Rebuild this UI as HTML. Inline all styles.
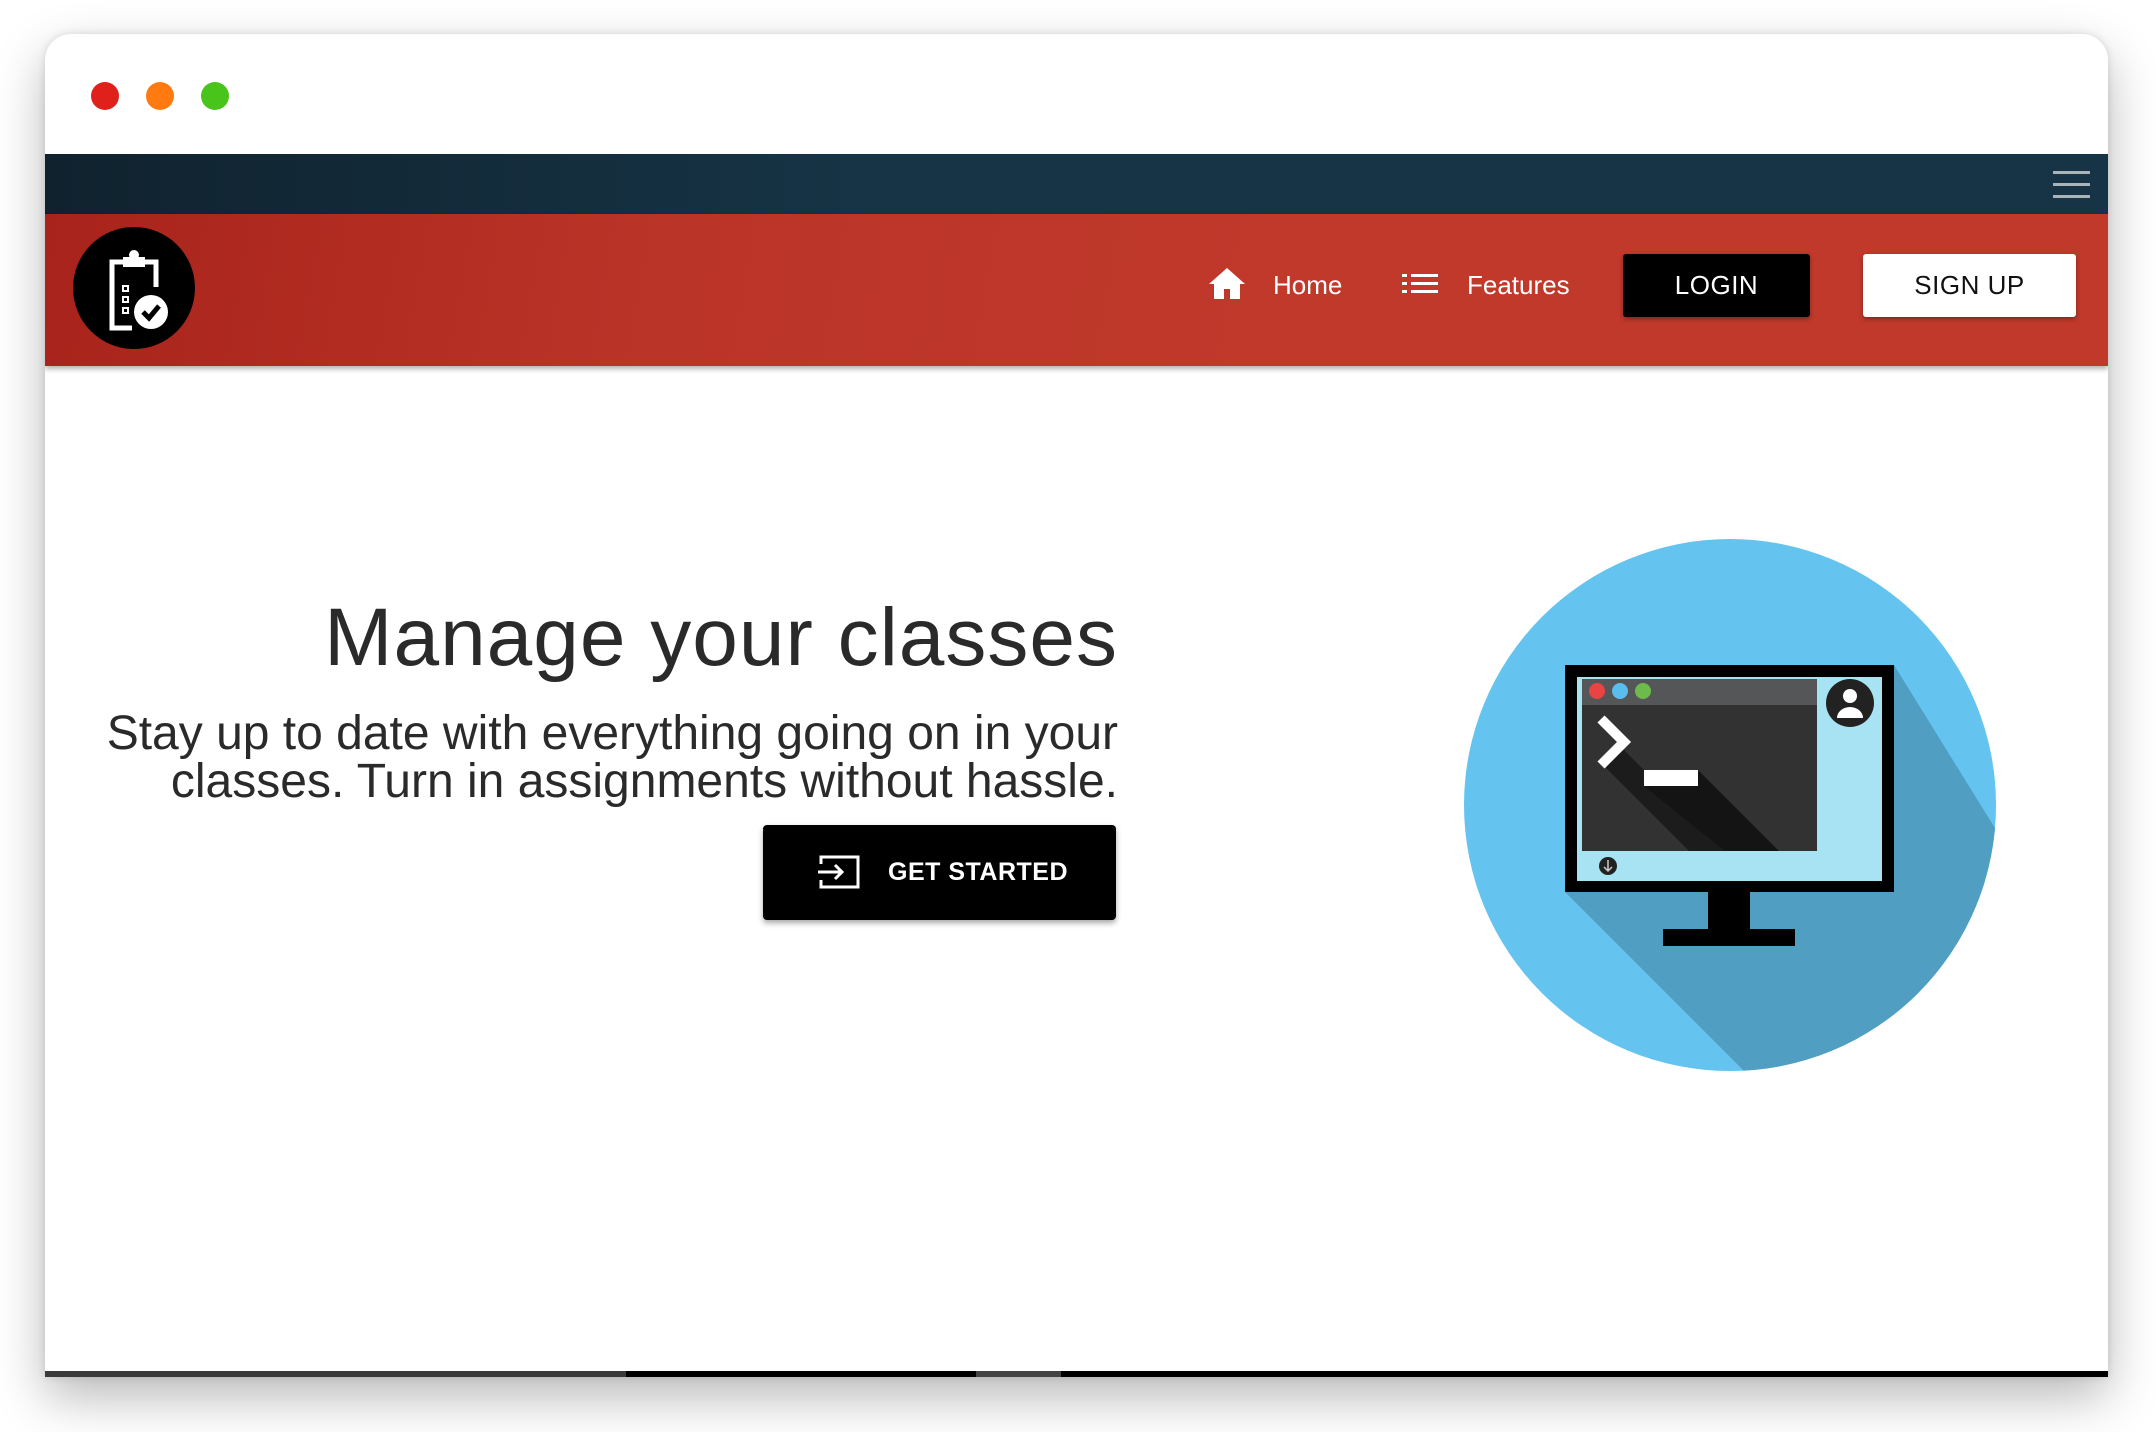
<!DOCTYPE html>
<html><head><meta charset="utf-8"><style>
*{margin:0;padding:0;box-sizing:border-box}
body{width:2156px;height:1432px;background:#fff;position:relative;overflow:hidden;font-family:"Liberation Sans",sans-serif}
.win{position:absolute;left:45px;top:34px;width:2063px;height:1343px;background:#fff;border-radius:26px 26px 0 0;box-shadow:0 20px 50px rgba(0,0,0,.28),0 0 8px rgba(0,0,0,.12);overflow:hidden}
.dot{position:absolute;top:48px;width:28px;height:28px;border-radius:50%}
.topbar{position:absolute;left:0;top:120px;width:100%;height:60px;background:linear-gradient(90deg,#10222e,#163446 40%,#173447)}
.ham{position:absolute;right:18px;width:37px;height:3px;background:#aab3b8}
.nav{position:absolute;left:0;top:180px;width:100%;height:152px;background:linear-gradient(100deg,#a8231b 0%,#bb3428 30%,#c0392b 60%,#c0392b);box-shadow:0 3px 5px rgba(0,0,0,.3)}
.logo{position:absolute;left:28px;top:13px;width:122px;height:122px;border-radius:50%;background:#000}
.navt{position:absolute;color:#fff;font-size:26px;top:56px}
.btn{position:absolute;top:40px;height:63px;font-size:26px;display:flex;align-items:center;justify-content:center;border-radius:3px;box-shadow:0 2px 4px rgba(0,0,0,.35);letter-spacing:.5px}
h1{position:absolute;right:990px;top:557px;font-weight:normal;font-size:82px;color:#2a2a2a;letter-spacing:1px;white-space:nowrap}
.sub{position:absolute;right:990px;top:676px;text-align:right;font-size:48px;line-height:48px;color:#2a2a2a;white-space:nowrap}
.gs{position:absolute;left:718px;top:791px;width:353px;height:95px;background:#000;border-radius:4px;box-shadow:0 3px 6px rgba(0,0,0,.35);color:#fff;font-size:25px;font-weight:bold;letter-spacing:.5px}
.bottom{position:absolute;left:0;bottom:0;width:100%;height:6px;background:#000}
</style></head><body>
<div class="win">
  <div class="dot" style="left:46px;background:#e0201b"></div>
  <div class="dot" style="left:101px;background:#ff7a10"></div>
  <div class="dot" style="left:156px;background:#48c41b"></div>
  <div class="topbar">
    <div class="ham" style="top:17px"></div><div class="ham" style="top:29px"></div><div class="ham" style="top:41px"></div>
  </div>
  <div class="nav">
    <div class="logo">
      <svg width="122" height="122" viewBox="0 0 122 122">
        <path d="M52 35h-13v66h20" fill="none" stroke="#fff" stroke-width="5"/>
        <path d="M70 35h13v25" fill="none" stroke="#fff" stroke-width="5"/>
        <rect x="50" y="30" width="22" height="10" fill="#fff"/>
        <circle cx="61" cy="28" r="5" fill="#fff"/>
        <rect x="50" y="59" width="5" height="5" fill="none" stroke="#fff" stroke-width="2"/>
        <rect x="50" y="70" width="5" height="5" fill="none" stroke="#fff" stroke-width="2"/>
        <rect x="50" y="81" width="5" height="5" fill="none" stroke="#fff" stroke-width="2"/>
        <circle cx="78" cy="85" r="17" fill="#fff"/>
        <path d="M70 85l6 6 10-12" fill="none" stroke="#000" stroke-width="5"/>
      </svg>
    </div>
    <svg style="position:absolute;left:1163px;top:52px" width="38" height="34" viewBox="0 0 38 34"><path d="M19 2L1 18h5v15h10v-10h6v10h10V18h5z" fill="#fff"/></svg>
    <div class="navt" style="left:1228px">Home</div>
    <svg style="position:absolute;left:1357px;top:58px" width="36" height="24" viewBox="0 0 36 24"><g fill="#fff"><rect x="0" y="2" width="5" height="3"/><rect x="9" y="2" width="27" height="3"/><rect x="0" y="10" width="5" height="3"/><rect x="9" y="10" width="27" height="3"/><rect x="0" y="18" width="5" height="3"/><rect x="9" y="18" width="27" height="3"/></g></svg>
    <div class="navt" style="left:1422px">Features</div>
    <div class="btn" style="left:1578px;width:187px;background:#000;color:#fff">LOGIN</div>
    <div class="btn" style="left:1818px;width:213px;background:#fff;color:#111">SIGN UP</div>
  </div>
  <h1>Manage your classes</h1>
  <div class="sub">Stay up to date with everything going on in your<br>classes. Turn in assignments without hassle.</div>
  <div class="gs">
    <svg style="position:absolute;left:55px;top:30px" width="42" height="34" viewBox="0 0 42 34"><path d="M3 9V2h37v30H3v-7" fill="none" stroke="#fff" stroke-width="3"/><path d="M0 17h24M17 10l7 7-7 7" fill="none" stroke="#fff" stroke-width="3"/></svg>
    <div style="position:absolute;left:125px;top:33px">GET STARTED</div>
  </div>
  <svg style="position:absolute;left:1418px;top:504px" width="534" height="534" viewBox="0 0 534 534">
    <defs><clipPath id="c"><circle cx="267" cy="267" r="266"/></clipPath><clipPath id="t"><rect x="119" y="141" width="235" height="172"/></clipPath></defs>
    <circle cx="267" cy="267" r="266" fill="#64c4ef"/>
    <g clip-path="url(#c)">
      <path d="M102 354L302 554L600 554L600 400L431 127L102 127Z" fill="#509fc3"/>
    </g>
    <rect x="102" y="127" width="329" height="227" fill="#000"/>
    <rect x="114" y="139" width="305" height="204" fill="#a8e3f3"/>
    <rect x="119" y="141" width="235" height="172" fill="#333233"/>
    <rect x="119" y="141" width="235" height="26" fill="#555657"/>
    <g clip-path="url(#t)">
      <path d="M143 230L226 313L300 313L235 248L181 248L181 232L156 207Z" fill="#1c1c1c"/>
      <path d="M181 232L235 232L316 313L262 313L181 248Z" fill="#141414"/>
    </g>
    <circle cx="134" cy="153" r="8" fill="#e94343"/><circle cx="157" cy="153" r="8" fill="#5bbcee"/><circle cx="180" cy="153" r="8" fill="#6cbb4b"/>
    <path d="M138 181l23 23-23 23" fill="none" stroke="#fff" stroke-width="10"/>
    <rect x="181" y="232" width="54" height="16" fill="#fff"/>
    <circle cx="387" cy="165" r="24" fill="#222"/>
    <circle cx="387" cy="158" r="7" fill="#fff"/>
    <path d="M374 180a13 11 0 0 1 26 0z" fill="#fff"/>
    <circle cx="145" cy="328" r="9" fill="#222"/>
    <path d="M145 322v10M141 329l4 4 4-4" stroke="#ccc" stroke-width="1.5" fill="none"/>
    <rect x="245" y="354" width="42" height="38" fill="#000"/>
    <rect x="200" y="391" width="132" height="17" fill="#000"/>
  </svg>
  <div class="bottom"><div style="position:absolute;left:0;width:581px;height:6px;background:#3a3a3a"></div><div style="position:absolute;left:931px;width:85px;height:6px;background:#444"></div></div>
</div>
</body></html>
